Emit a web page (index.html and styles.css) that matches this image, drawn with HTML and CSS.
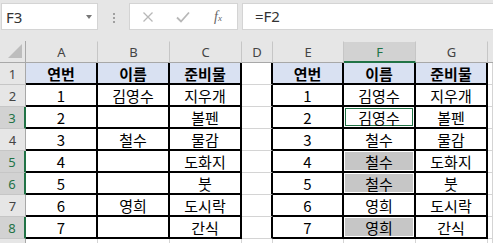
FILE: index.html
```html
<!DOCTYPE html>
<html lang="ko">
<head>
  <meta charset="UTF-8" />
  <title>시트</title>
  <meta name="viewport" content="width=device-width, initial-scale=1" />
  <link rel="stylesheet" href="styles.css">
</head>
<body>
  <div class="formula-bar">
    <div class="name-box">
      <span class="name">F3</span>
      <span class="drop"></span>
    </div>
    <div class="grip"><i></i><i></i><i></i></div>
    <div class="fx-box">
      <svg class="ico" width="12" height="12" viewBox="0 0 12 12"><path d="M1.5 1.5 L10.5 10.5 M10.5 1.5 L1.5 10.5" stroke="#b8b8b8" stroke-width="1.3" fill="none"/></svg>
      <svg class="ico" width="14" height="12" viewBox="0 0 14 12"><path d="M1 6.5 L5 10.5 L13 1.5" stroke="#b8b8b8" stroke-width="1.8" fill="none"/></svg>
      <span class="fx">f<sub>x</sub></span>
    </div>
    <div class="formula">=F2</div>
  </div>

  <div class="sheet">
    <div class="hd corner"><span class="tri"></span></div>
    <div class="hd col">A</div>
    <div class="hd col">B</div>
    <div class="hd col">C</div>
    <div class="hd col">D</div>
    <div class="hd col">E</div>
    <div class="hd col sel">F</div>
    <div class="hd col">G</div>
    <div class="hd col last"></div>

    <div class="hd row">1</div>
    <div class="c t th">연번</div><div class="c t th">이름</div><div class="c t th">준비물</div>
    <div class="c gap"></div>
    <div class="c t th">연번</div><div class="c t th">이름</div><div class="c t th">준비물</div>
    <div class="c"></div>

    <div class="hd row">2</div>
    <div class="c t">1</div><div class="c t">김영수</div><div class="c t">지우개</div>
    <div class="c gap"></div>
    <div class="c t">1</div><div class="c t">김영수</div><div class="c t">지우개</div>
    <div class="c"></div>

    <div class="hd row sel">3</div>
    <div class="c t">2</div><div class="c t"></div><div class="c t">볼펜</div>
    <div class="c gap"></div>
    <div class="c t">2</div><div class="c t active">김영수</div><div class="c t">볼펜</div>
    <div class="c"></div>

    <div class="hd row">4</div>
    <div class="c t">3</div><div class="c t">철수</div><div class="c t">물감</div>
    <div class="c gap"></div>
    <div class="c t">3</div><div class="c t">철수</div><div class="c t">물감</div>
    <div class="c"></div>

    <div class="hd row sel">5</div>
    <div class="c t">4</div><div class="c t"></div><div class="c t">도화지</div>
    <div class="c gap"></div>
    <div class="c t">4</div><div class="c t picked">철수</div><div class="c t">도화지</div>
    <div class="c"></div>

    <div class="hd row sel">6</div>
    <div class="c t">5</div><div class="c t"></div><div class="c t">붓</div>
    <div class="c gap"></div>
    <div class="c t">5</div><div class="c t picked">철수</div><div class="c t">붓</div>
    <div class="c"></div>

    <div class="hd row">7</div>
    <div class="c t">6</div><div class="c t">영희</div><div class="c t">도시락</div>
    <div class="c gap"></div>
    <div class="c t">6</div><div class="c t">영희</div><div class="c t">도시락</div>
    <div class="c"></div>

    <div class="hd row sel">8</div>
    <div class="c t">7</div><div class="c t"></div><div class="c t">간식</div>
    <div class="c gap"></div>
    <div class="c t">7</div><div class="c t picked">영희</div><div class="c t">간식</div>
    <div class="c"></div>

    <div class="hd row"></div>
    <div class="c"></div><div class="c"></div><div class="c"></div>
    <div class="c"></div>
    <div class="c"></div><div class="c"></div><div class="c"></div>
    <div class="c"></div>
  </div>
</body>
</html>
```

FILE: styles.css
```css
body {
  margin: 0;
  width: 493px;
  height: 243px;
  overflow: hidden;
  background-color: #e6e6e6;
  font-family: "Noto Sans CJK KR", "Noto Sans", sans-serif;
  color: #000;
}

/* formula bar */
.formula-bar {
  display: flex;
  height: 41px;
  padding: 3px 0 0 1px;
  box-sizing: border-box;
}

.name-box,
.fx-box,
.formula {
  height: 27px;
  box-sizing: border-box;
  background-color: #fff;
  border: 1px solid #d4d4d4;
}

.name-box {
  width: 97px;
  display: flex;
  align-items: center;
  justify-content: space-between;
  padding: 0 5px 0 4px;
}

.name {
  font-family: "Noto Sans", sans-serif;
  font-size: 15px;
  color: #333;
}

.drop {
  width: 0;
  height: 0;
  border-left: 3.5px solid transparent;
  border-right: 3.5px solid transparent;
  border-top: 4px solid #777;
}

.grip {
  width: 31px;
  display: flex;
  flex-direction: column;
  align-items: center;
  gap: 2px;
  padding-top: 10px;
  box-sizing: border-box;
}

.grip i {
  width: 2px;
  height: 2px;
  background-color: #a0a0a0;
}

.fx-box {
  width: 109px;
  display: flex;
  align-items: center;
  padding-left: 12px;
  gap: 22px;
}

.ico {
  display: block;
}

.fx {
  font-family: "Liberation Serif", serif;
  font-style: italic;
  font-size: 14px;
  color: #666;
  margin-left: 2px;
}

.fx sub {
  font-size: 9px;
  vertical-align: 0;
}

.formula {
  flex: 1;
  margin-left: 4px;
  border-right: none;
  padding-left: 12px;
  font-family: "Noto Sans", sans-serif;
  font-size: 15px;
  line-height: 24px;
  color: #333;
}

/* grid */
.sheet {
  display: grid;
  grid-template-columns: 26px 72px 72px 72px 31px 71px 72px 72px 1fr;
  grid-template-rows: 22px;
  grid-auto-rows: 22px;
}

.sheet > div {
  box-sizing: border-box;
  display: flex;
  align-items: center;
  justify-content: center;
}

.hd {
  background-color: #e6e6e6;
  color: #444;
  font-family: "Noto Sans", sans-serif;
  font-size: 13px;
}

.col {
  border-right: 1px solid #c6c6c6;
  border-bottom: 1px solid #a8a8a8;
  border-top: 1px solid #e6e6e6;
}

.col.last {
  border-right: none;
}

.col.sel {
  background-color: #d2d2d2;
  color: #217346;
  border-bottom: 2px solid #217346;
}

.corner {
  border-right: 1px solid #a8a8a8;
  border-bottom: 1px solid #a8a8a8;
  position: relative;
}

.tri {
  position: absolute;
  right: 3px;
  bottom: 4px;
  width: 0;
  height: 0;
  border-left: 14px solid transparent;
  border-bottom: 14px solid #bdbdbd;
}

.row {
  border-right: 1px solid #a8a8a8;
  border-bottom: 1px solid #c6c6c6;
}

.row.sel {
  background-color: #d2d2d2;
  color: #217346;
  border-right: 2px solid #217346;
}

.c {
  background-color: #fff;
  border-right: 1px solid #d4d4d4;
  border-bottom: 1px solid #d4d4d4;
  font-size: 15px;
  padding-top: 1px;
}

.c.t {
  border-right: 2px solid #000;
  border-bottom: 2px solid #000;
}

.c.gap {
  border-right: 2px solid #000;
}

.c.th {
  background-color: #d9e1f2;
  font-weight: bold;
}

.c.active {
  box-shadow: inset 0 0 0 1px #fff, inset 0 0 0 2px #217346;
}

.c.picked {
  background-color: #c6c6c6;
  box-shadow: inset 0 0 0 1px #fff;
}
```
